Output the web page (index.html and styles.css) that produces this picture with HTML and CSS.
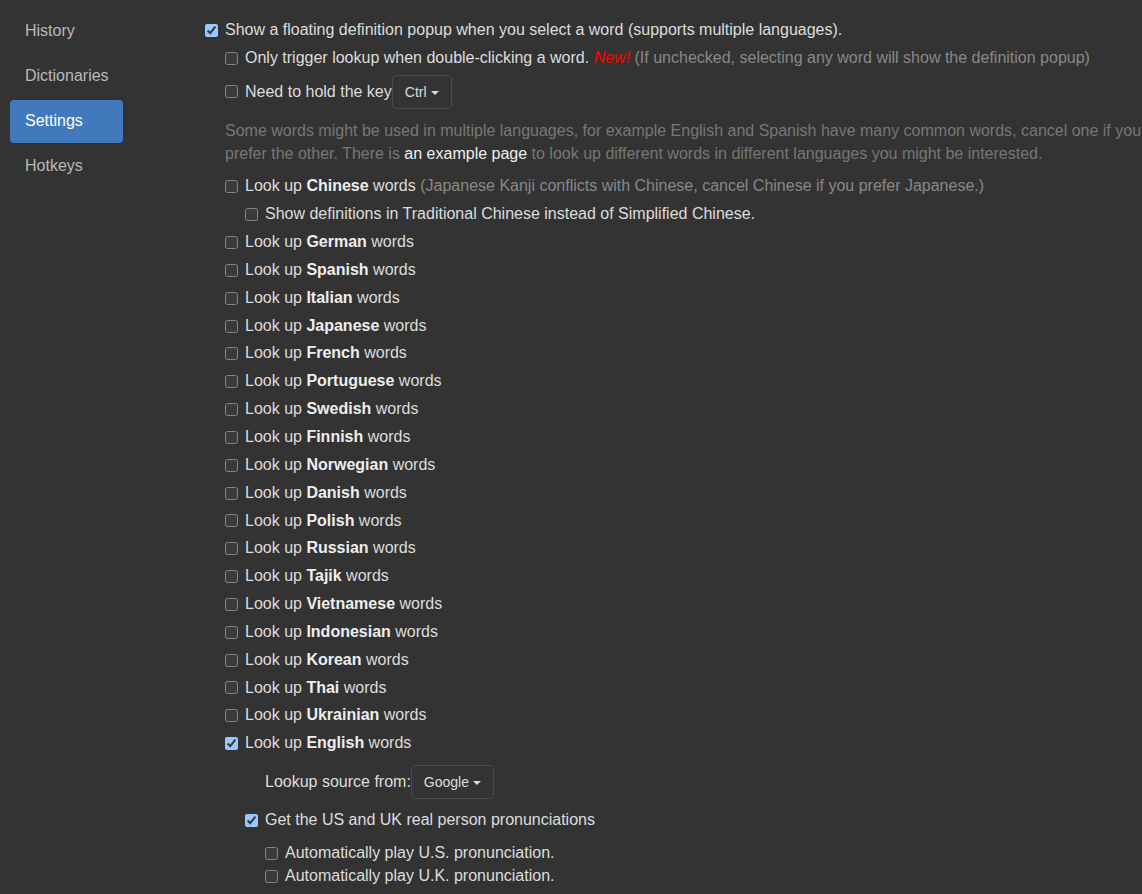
FILE: index.html
```html
<!DOCTYPE html>
<html lang="en">
<head>
    <meta charset="UTF-8">
    <meta name="viewport" content="width=device-width, initial-scale=1.0">
    <title>Options</title>
    <link rel="stylesheet" href="styles.css">
</head>
<body>
<div class="page">
    <!-- left menu -->
    <nav class="menu">
        <a href="#">History</a>
        <a href="#">Dictionaries</a>
        <a href="#" class="on">Settings</a>
        <a href="#">Hotkeys</a>
    </nav>

    <!-- settings list -->
    <main class="settings">
        <label class="opt"><input type="checkbox" checked>Show a floating definition popup when you select a word (supports multiple languages).</label>
        <div class="sub">
            <label class="opt"><input type="checkbox">Only trigger lookup when double-clicking a word.&nbsp;<em class="new">New!</em>&nbsp;<span class="muted">(If unchecked, selecting any word will show the definition popup)</span></label>
            <label class="opt with-btn"><input type="checkbox">Need to hold the key<span class="drop">Ctrl<span class="caret"></span></span></label>
            <p class="help">Some words might be used in multiple languages, for example English and Spanish have many common words, cancel one if you prefer the other. There is <a href="#">an example page</a> to look up different words in different languages you might be interested.</p>

            <label class="opt"><input type="checkbox">Look up&nbsp;<b>Chinese</b>&nbsp;words&nbsp;<span class="muted">(Japanese Kanji conflicts with Chinese, cancel Chinese if you prefer Japanese.)</span></label>
            <div class="sub">
                <label class="opt"><input type="checkbox">Show definitions in Traditional Chinese instead of Simplified Chinese.</label>
            </div>
            <label class="opt"><input type="checkbox">Look up&nbsp;<b>German</b>&nbsp;words</label>
            <label class="opt"><input type="checkbox">Look up&nbsp;<b>Spanish</b>&nbsp;words</label>
            <label class="opt"><input type="checkbox">Look up&nbsp;<b>Italian</b>&nbsp;words</label>
            <label class="opt"><input type="checkbox">Look up&nbsp;<b>Japanese</b>&nbsp;words</label>
            <label class="opt"><input type="checkbox">Look up&nbsp;<b>French</b>&nbsp;words</label>
            <label class="opt"><input type="checkbox">Look up&nbsp;<b>Portuguese</b>&nbsp;words</label>
            <label class="opt"><input type="checkbox">Look up&nbsp;<b>Swedish</b>&nbsp;words</label>
            <label class="opt"><input type="checkbox">Look up&nbsp;<b>Finnish</b>&nbsp;words</label>
            <label class="opt"><input type="checkbox">Look up&nbsp;<b>Norwegian</b>&nbsp;words</label>
            <label class="opt"><input type="checkbox">Look up&nbsp;<b>Danish</b>&nbsp;words</label>
            <label class="opt"><input type="checkbox">Look up&nbsp;<b>Polish</b>&nbsp;words</label>
            <label class="opt"><input type="checkbox">Look up&nbsp;<b>Russian</b>&nbsp;words</label>
            <label class="opt"><input type="checkbox">Look up&nbsp;<b>Tajik</b>&nbsp;words</label>
            <label class="opt"><input type="checkbox">Look up&nbsp;<b>Vietnamese</b>&nbsp;words</label>
            <label class="opt"><input type="checkbox">Look up&nbsp;<b>Indonesian</b>&nbsp;words</label>
            <label class="opt"><input type="checkbox">Look up&nbsp;<b>Korean</b>&nbsp;words</label>
            <label class="opt"><input type="checkbox">Look up&nbsp;<b>Thai</b>&nbsp;words</label>
            <label class="opt"><input type="checkbox">Look up&nbsp;<b>Ukrainian</b>&nbsp;words</label>
            <label class="opt"><input type="checkbox" checked>Look up&nbsp;<b>English</b>&nbsp;words</label>
            <div class="sub">
                <div class="source with-btn">Lookup source from:<span class="drop">Google<span class="caret"></span></span></div>
                <label class="opt pron"><input type="checkbox" checked>Get the US and UK real person pronunciations</label>
                <div class="sub tight">
                    <label class="opt"><input type="checkbox">Automatically play U.S. pronunciation.</label>
                    <label class="opt"><input type="checkbox">Automatically play U.K. pronunciation.</label>
                </div>
            </div>
        </div>
    </main>
</div>
</body>
</html>
```

FILE: styles.css
```css
* {margin:0; padding:0; box-sizing:border-box;}
html {color-scheme:dark;}
body {background:#333; color:#ddd; font-family:"Liberation Sans", Arial, sans-serif; font-size:16px; line-height:1.428571; overflow:hidden;}
a {color:#eee; text-decoration:none;}

.page {display:flex; align-items:flex-start;}

/* menu */
.menu {display:flex; flex-direction:column; gap:2px; width:123px; padding:10px 0 0 10px; flex-shrink:0;}
.menu a {display:block; padding:10px 15px; border-radius:4px; color:#b9b9b9;}
.menu a.on {background:#4279bd; color:#fff;}

/* settings */
.settings {display:flex; flex-direction:column; gap:5px; padding:19px 0 0 82px; width:1030px; flex-shrink:0;}
.sub {display:flex; flex-direction:column; gap:5px; padding-left:20px;}
.sub.tight {gap:0; margin-top:5px;}
.opt {display:flex; align-items:center; white-space:nowrap;}
.opt input {width:13px; height:13px; margin:0 7px 0 0; flex-shrink:0;}
.opt b {color:#eee;}
.muted {color:#888;}
.new {color:#f00;}
.help {color:#777; width:925px; margin:6px 0 5px;}

.with-btn {align-items:baseline;}
.with-btn input {align-self:center;}
.source {display:flex; padding-left:20px; margin-top:5px;}
.pron {margin-top:5px;}

/* dropdown button */
.drop {display:inline-flex; align-items:center; gap:4px; padding:6px 12px; border:1px solid #4a4a4a; border-radius:4px; font-size:14px; line-height:20px; color:#ddd;}
.caret {width:0; height:0; border-top:4px solid #ddd; border-left:4px solid transparent; border-right:4px solid transparent; margin-top:2px;}
```
